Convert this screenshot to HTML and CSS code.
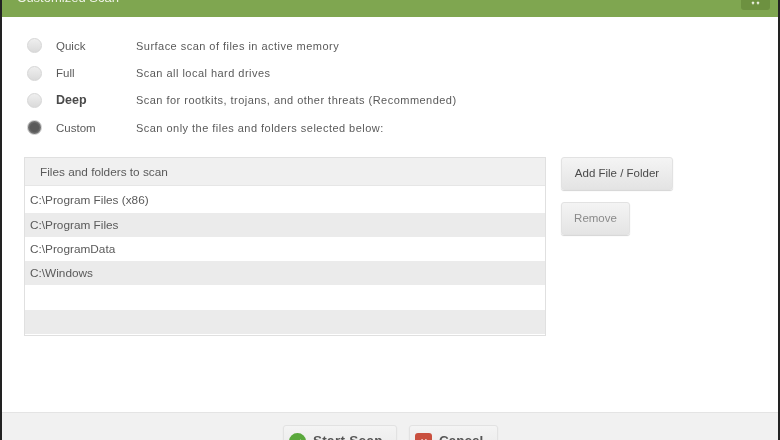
FILE: index.html
```html
<!DOCTYPE html>
<html lang="en">
<head>
<meta charset="utf-8">
<title>Customized Scan</title>
<link rel="stylesheet" href="styles.css">
</head>
<body>
<div class="window">
  <header class="titlebar">
    <span class="title">Customized Scan</span>
    <span class="close"><svg width="10" height="8" viewBox="0 0 10 8"><path d="M1 1l2 2m0-2L1 3M6 1l2 2m0-2L6 3" stroke="#e8eedd" stroke-width="1.4" fill="none"/></svg></span>
  </header>
  <main class="body">
    <div class="options">
      <div class="option"><span class="radio"></span><span class="name">Quick</span><span class="desc">Surface scan of files in active memory</span></div>
      <div class="option"><span class="radio"></span><span class="name">Full</span><span class="desc">Scan all local hard drives</span></div>
      <div class="option"><span class="radio"></span><span class="name strong">Deep</span><span class="desc">Scan for rootkits, trojans, and other threats (Recommended)</span></div>
      <div class="option"><span class="radio on"></span><span class="name">Custom</span><span class="desc">Scan only the files and folders selected below:</span></div>
    </div>
    <div class="picker">
      <div class="table">
        <div class="thead">Files and folders to scan</div>
        <div class="row first">C:\Program Files (x86)</div>
        <div class="row alt">C:\Program Files</div>
        <div class="row">C:\ProgramData</div>
        <div class="row alt">C:\Windows</div>
        <div class="row last"></div>
        <div class="row alt"></div>
      </div>
      <div class="actions">
        <button class="btn add">Add File / Folder</button>
        <button class="btn remove">Remove</button>
      </div>
    </div>
  </main>
  <footer class="footer">
    <button class="btn foot start"><span class="ico green"><svg width="10" height="10" viewBox="0 0 10 10"><path d="M2 5l2 2 4-4" stroke="#fff" stroke-width="1.6" fill="none"/></svg></span>Start Scan</button>
    <button class="btn foot cancel"><span class="ico red"><svg width="10" height="10" viewBox="0 0 10 10"><path d="M2.5 2.5l5 5m0-5l-5 5" stroke="#fff" stroke-width="1.6" fill="none"/></svg></span>Cancel</button>
  </footer>
</div>
</body>
</html>
```

FILE: styles.css
```css
* { box-sizing: border-box; }
html, body { margin: 0; height: 440px; overflow: hidden; background: #fff; }
body { font-family: "Liberation Sans", Arial, sans-serif; font-size: 11.8px; color: #5a5a5a; }
.window {
  width: 780px; height: 440px; overflow: hidden; display: flex; flex-direction: column;
  border-left: 2px solid #222; border-right: 2px solid #222; background: #fff;
  filter: blur(0.55px);
}
.titlebar {
  height: 17px; flex: none; background: #7fa650; display: flex; align-items: flex-end;
  justify-content: space-between; padding: 0 8px 0 15px; overflow: hidden;
}
.title { color: #eef3e6; font-size: 13px; line-height: 15px; margin-bottom: 12px; white-space: nowrap; flex: none; }
.close {
  width: 29px; height: 26px; flex: none; border-radius: 3px; background: #6d9140;
  display: flex; justify-content: center; align-items: flex-start; padding-top: 17px; margin-bottom: 7px; margin-top: -15px;
}
.body { flex: 1; padding: 15px 0 0 22px; min-height: 0; }
.options { display: flex; flex-direction: column; }
.option { height: 27.35px; display: flex; align-items: center; }
.radio {
  width: 15px; height: 15px; border-radius: 50%; margin-left: 3px; flex: none;
  background: linear-gradient(#efefef, #dadada); border: 1px solid #d6d6d6;
}
.radio.on { background: radial-gradient(circle, #5a5a5a 45%, #7c7c7c 70%, #b5b5b5 100%); border-color: #ccc; }
.name { width: 80px; margin-left: 14px; flex: none; font-size: 11.5px; }
.name.strong { font-weight: bold; font-size: 12.5px; color: #4a4a4a; }
.desc { font-size: 11px; letter-spacing: 0.47px; }
.picker { display: flex; margin-top: 16px; align-items: flex-start; }
.table { width: 522px; height: 179px; flex: none; border: 1px solid #e0e0e0; background: #fff; }
.thead {
  height: 28px; padding-left: 15px; line-height: 29px; background: #f0f0f0; border-bottom: 1px solid #e6e6e6;
}
.row { height: 24px; line-height: 24px; padding-left: 5px; }
.row.first { height: 27px; line-height: 28px; }
.row.last { height: 25px; }
.row.alt { background: #ebebeb; }
.actions { display: flex; flex-direction: column; align-items: flex-start; gap: 12px; margin-left: 15px; }
.btn {
  font: inherit; font-size: 11.5px; color: #4a4a4a; border: 1px solid #e2e2e2; border-radius: 3px; padding: 0 0 2px;
  background: linear-gradient(#f4f4f4, #e4e4e4); box-shadow: 0 1px 1px #d4d4d4;
}
.add { width: 112px; height: 33px; }
.remove { width: 69px; height: 33px; color: #8a8a8a; }
.footer {
  height: 28px; flex: none; background: #f1f1f1; border-top: 1px solid #e4e4e4; display: flex;
  padding: 12px 0 0 281px; gap: 12px; overflow: hidden;
}
.foot { height: 40px; flex: none; display: flex; align-items: flex-start; padding-top: 7px; font-size: 13.5px; font-weight: bold; letter-spacing: 0.3px; color: #555; }
.start { width: 114px; padding-left: 5px; }
.cancel { width: 89px; padding-left: 5px; letter-spacing: 0; }
.ico { width: 17px; height: 17px; margin-right: 7px; display: flex; align-items: center; justify-content: center; flex: none; }
.ico.green { background: #5aa83c; border-radius: 50%; }
.ico.red { background: #c9503f; border-radius: 3px; }
```
